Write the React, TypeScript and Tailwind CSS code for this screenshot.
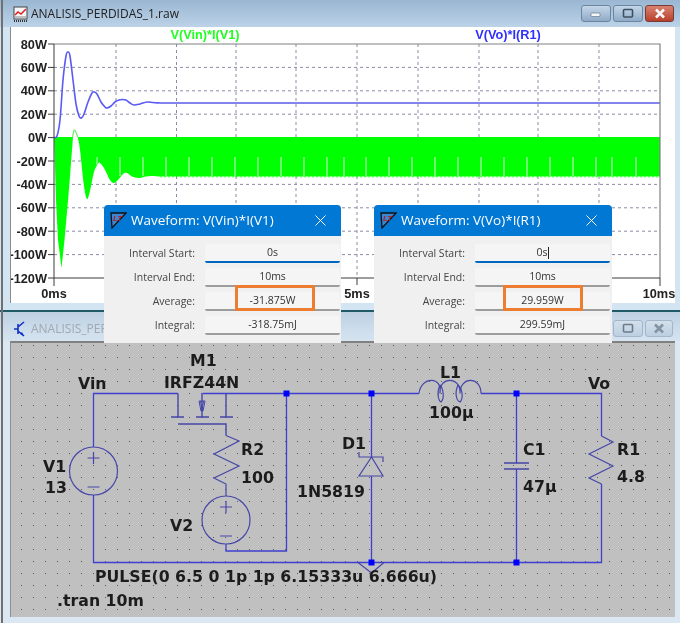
import React from "react";

type P = [number, number];

function curve(pts: P[]): string {
  let d = `M${pts[0][0]},${pts[0][1]}`;
  for (let i = 0; i < pts.length - 1; i++) {
    const p0 = pts[Math.max(i - 1, 0)];
    const p1 = pts[i];
    const p2 = pts[i + 1];
    const p3 = pts[Math.min(i + 2, pts.length - 1)];
    const c1: P = [p1[0] + (p2[0] - p0[0]) / 6, p1[1] + (p2[1] - p0[1]) / 6];
    const c2: P = [p2[0] - (p3[0] - p1[0]) / 6, p2[1] - (p3[1] - p1[1]) / 6];
    d += ` C${c1[0].toFixed(1)},${c1[1].toFixed(1)} ${c2[0].toFixed(1)},${c2[1].toFixed(1)} ${p2[0]},${p2[1]}`;
  }
  return d;
}

const bluePts: P[] = [
  [54, 137.5], [57, 136], [60, 120], [63, 80], [66, 56], [68, 52], [70, 56], [73, 80], [76, 104], [79, 116], [81.5, 118],
  [84, 114], [88, 102], [92, 93], [94, 92], [97, 94], [101, 102], [105, 107], [107, 108], [111, 106], [115, 102], [119, 100],
  [122, 99.5], [126, 100], [130, 103], [134, 105], [140, 104], [147, 102], [153, 102.5], [160, 103],
];
const greenTail: P[] = [
  [77.7, 137], [80, 150], [84, 186], [87, 199], [90, 191], [94, 172], [98, 164], [100, 163], [104, 168], [110, 180], [114, 183],
  [118, 180], [123, 174], [127, 173], [133, 177], [140, 178], [146, 176.5], [152, 176], [160, 176.5],
];

const yTicks = [
  ["80W", 44], ["60W", 67.4], ["40W", 90.8], ["20W", 114.2], ["0W", 137.6], ["-20W", 161], ["-40W", 184.4], ["-60W", 207.8],
  ["-80W", 231.2], ["-100W", 254.6], ["-120W", 278],
] as const;
const xGrid = [116, 176.5, 236, 296, 357, 418, 479, 538, 599];
const spikes = [97, 120, 143, 166, 189, 212, 235, 258, 281, 304, 327, 344, 366, 389, 412, 435, 458, 481, 504, 527, 550, 573, 596, 612, 636];

function Plot() {
  const tail = curve(greenTail).replace(/^M[^ ]+/, "");
  return (
    <svg viewBox="11 27 664 276" className="block h-full w-full font-['Liberation_Sans'] text-[12.75px] font-bold">
      {yTicks.slice(1, 10).map(([l, y]) =>
        y === 137.6 ? null : (
          <line key={l} x1="54" x2="660" y1={y} y2={y} stroke="#8c8ca8" strokeWidth="1" strokeDasharray="3 3" />
        )
      )}
      {xGrid.map((x) => (
        <line key={x} x1={x} x2={x} y1="44" y2="278" stroke="#8c8ca8" strokeWidth="1" strokeDasharray="3 3" />
      ))}
      <path
        d={`M54,137 L54.5,150 L56,200 L58,240 L61.5,268 L64.5,240 L68.5,195 L72,150 L73,137 L77.7,137 ${tail} L660,176.5 L660,137 Z`}
        fill="#00ff00"
      />
      <line x1="160" x2="660" y1="177" y2="177" stroke="#00ff00" strokeWidth="1" strokeDasharray="2 2" opacity="0.6" />
      <path d="M72.5,137 L74,130 L75.5,131 L77.7,137" fill="none" stroke="#70f070" strokeWidth="1.2" />
      {spikes.map((x) => (
        <line key={x} x1={x} x2={x} y1="157" y2={x < 110 ? 165 : 176} stroke="#d8ffd8" strokeWidth="1" />
      ))}
      <path d={curve(bluePts)} fill="none" stroke="#5a5af5" strokeWidth="1.6" />
      <line x1="160" x2="660" y1="103" y2="103" stroke="#8484ee" strokeWidth="2" />
      <path d="M54,44 H660 V278" fill="none" stroke="#808080" strokeWidth="1.2" />
      <path d="M54,44 V286 M54,278 H660 M357,278 V285 M660,278 V286" fill="none" stroke="#3a3a3a" strokeWidth="1" />
      {yTicks.map(([l, y]) => (
        <g key={l}>
          <line x1="48" x2="54" y1={y} y2={y} stroke="#3a3a3a" strokeWidth="1" />
          <text x="47" y={y + 4.5} textAnchor="end" fill="#222">{l}</text>
        </g>
      ))}
      <text x="54" y="298" textAnchor="middle" fill="#222">0ms</text>
      <text x="357" y="298" textAnchor="middle" fill="#222">5ms</text>
      <text x="659" y="298" textAnchor="middle" fill="#222">10ms</text>
      <text x="205" y="39" textAnchor="middle" fill="#22ff22">V(Vin)*I(V1)</text>
      <text x="508" y="39" textAnchor="middle" fill="#3030ff">V(Vo)*I(R1)</text>
    </svg>
  );
}

const WIRE = "#3f3fd0";
const PART = "#4646a8";

function Source({ cx, cy }: { cx: number; cy: number }) {
  return (
    <g fill="none" stroke={PART} strokeWidth="1.2">
      <circle cx={cx} cy={cy} r="24" />
      <path d={`M${cx - 6},${cy - 13} h12 M${cx},${cy - 19} v12 M${cx - 6},${cy + 16} h12`} />
    </g>
  );
}

function Node({ x, y }: { x: number; y: number }) {
  return <rect x={x - 3} y={y - 3} width="6" height="6" fill="#0000ff" />;
}

const labels: [string, number, number][] = [
  ["M1", 190, 366], ["IRFZ44N", 164, 388], ["Vin", 78, 389], ["R2", 241, 455], ["100", 241, 483], ["V1", 43, 472], ["13", 45, 493],
  ["V2", 170, 531], ["1N5819", 297, 497], ["D1", 342, 449], ["L1", 440, 378], ["100µ", 429, 418], ["C1", 523, 455], ["47µ", 523, 492],
  ["Vo", 588, 389], ["R1", 617, 455], ["4.8", 617, 482], ["PULSE(0 6.5 0 1p 1p 6.15333u 6.666u)", 95, 582], [".tran 10m", 57, 606],
];

function Schematic() {
  return (
    <svg viewBox="11 343 664 274" className="block h-full w-full font-['DejaVu_Sans'] text-[15.75px] font-bold">
      <defs>
        <pattern id="dots" x="21" y="345" width="12" height="12" patternUnits="userSpaceOnUse">
          <rect width="1" height="1" fill="#5a5a5a" />
        </pattern>
      </defs>
      <rect x="11" y="343" width="664" height="274" fill="url(#dots)" />
      <path
        d="M178,393.5 H93.5 V447 M93.5,495 V562.5 H601.5 V484 M601.5,436 V393.5 H481 M419,393.5 H202.5 M286.5,393.5 V551 H226 V544 M371.5,393.5 V457 M371.5,476 V562.5 M516.5,393.5 V463 M516.5,469 V562.5"
        fill="none"
        stroke={WIRE}
        strokeWidth="1.3"
      />
      <g fill="none" stroke={PART} strokeWidth="1.2">
        <path d="M178,393.5 V417 M171,417 h13 M196,417 h13 M220,417 h13 M226,393.5 V417 M202,393.5 V417 M178,424 H226 V435.5" strokeWidth="1.4" />
        <path d="M199,401 h6 l-2,10 h-2 z M200.5,401 l1.5,10 l1.5,-10" strokeWidth="1" />
        <path d="M226,435.5 L239,441 L214,454 L239,466 L214,478 L226,484 V496" />
        <path d="M601.5,436 L613,442 L589,454 L613,466 L589,478 L601.5,484" />
        <path d="M419,393.5 C421,376 443,376 440,393.5 M440,393 C439,376 461,376 460,393.5 M460,393.5 C460,376 481,376 481,393.5" />
        <path d="M440,385 C436,394 439,401 441,402 C445,398 443,388 440,385 M458,385 C454,394 457,401 460,402 C464,398 462,388 458,385" />
        <path d="M371.5,457 L383,476 H359 Z M359,452 V457 H383 V462" />
        <path d="M504,463 H529 M504,469 H529" strokeWidth="1.6" />
        <path d="M358,562.5 L371.5,573 L384,562.5" />
      </g>
      <Source cx={93.5} cy={471} />
      <Source cx={226} cy={520} />
      <Node x={286.5} y={393.5} />
      <Node x={371.5} y={393.5} />
      <Node x={516.5} y={393.5} />
      <Node x={371.5} y={562.5} />
      <Node x={516.5} y={562.5} />
      {labels.map(([t, x, y]) => (
        <text key={t} x={x} y={y} fill="#1c1c1c">{t}</text>
      ))}
    </svg>
  );
}

function WinBtn({ w, tone, glyph }: { w: string; tone: "plain" | "close" | "idle"; glyph: "min" | "max" | "x" }) {
  const cls =
    tone === "close"
      ? "border-[#7a3a34] bg-linear-to-b from-[#d9806f] to-[#b8402c]"
      : tone === "plain"
        ? "border-[#6d86a0] bg-linear-to-b from-[#c4d6e8] to-[#8fabc8]"
        : "border-[#a3b6ca] bg-linear-to-b from-[#d3e0ec] to-[#bccfe1]";
  const col = tone === "close" || tone === "plain" ? "#f4f6f8" : "#8493a3";
  return (
    <div className={`flex h-[17px] items-center justify-center rounded-[3px] border ${w} ${cls}`}>
      <svg width="14" height="11" viewBox="0 0 14 11">
        {glyph === "min" && <rect x="2" y="5" width="9" height="3.5" rx="1" fill={col} stroke="#5a6a7c" strokeWidth="0.6" />}
        {glyph === "max" && <rect x="2.5" y="1.5" width="9" height="7.5" rx="1" fill="none" stroke={tone === "plain" ? "#3f4f62" : "#6c7a8a"} strokeWidth="1.6" />}
        {glyph === "x" && <path d="M3,1.5 L11,9.5 M11,1.5 L3,9.5" stroke={col} strokeWidth="2.6" />}
      </svg>
    </div>
  );
}

function PlotIcon() {
  return (
    <svg width="15" height="16" viewBox="0 0 15 16">
      <rect x="1" y="1" width="13" height="12" fill="#f4f6f8" stroke="#444" strokeWidth="1" />
      <path d="M1,15 h1 M3,15 h1 M5,15 h1 M7,15 h1 M9,15 h1 M11,15 h1 M13,15 h1" stroke="#333" strokeWidth="2" />
      <path d="M2,9 L5,6 L8,8 L13,3" fill="none" stroke="#e02020" strokeWidth="1.5" />
      <path d="M2,11 H13" stroke="#888" strokeWidth="1" />
    </svg>
  );
}

function SchemIcon() {
  return (
    <svg width="14" height="16" viewBox="0 0 14 16">
      <path d="M1,8 H5 M5,3 V13 M5,6 L11,1 M5,10 L11,15" fill="none" stroke="#1030c8" strokeWidth="1.6" />
      <path d="M11,15 L7,13 L9,11 Z" fill="#1030c8" />
    </svg>
  );
}

function LtLogo() {
  return (
    <svg width="17" height="17" viewBox="0 0 17 17" className="font-['Liberation_Sans']">
      <path d="M1,1 H16 L2,16 Z" fill="#3a86d0" stroke="#111" strokeWidth="1.3" />
      <text x="3" y="9" fill="#c01818" className="text-[8px] font-bold italic">LT</text>
    </svg>
  );
}

function Row({ label, value, active, caret }: { label: string; value: string; active?: boolean; caret?: boolean }) {
  return (
    <div className="flex h-[19px] items-center">
      <div className="w-[91px] text-right text-[10.5px] text-[#444]">{label}</div>
      <div
        className={`ml-[10px] flex h-full w-[135px] items-center justify-center rounded-[2px] bg-[#f5f5f5] text-[10.5px] text-[#333] ${
          active ? "border-b-2 border-b-[#0067c0]" : "border-b-2 border-b-[#9c9c9c]"
        }`}
      >
        {value}
        {caret && <span className="h-[12px] w-px bg-[#222]" />}
      </div>
    </div>
  );
}

function Dialog({ pos, title, rows }: { pos: string; title: string; rows: [string, string][] }) {
  return (
    <div className={`absolute flex flex-col overflow-hidden rounded-t-[4px] bg-[#f0f0f0] font-['Open_Sans'] ${pos}`}>
      <div className="flex h-[31px] shrink-0 items-center bg-[#0078d4] pl-[6px] pr-[15px] text-white">
        <LtLogo />
        <span className="ml-[4px] flex-1 text-[13.5px] leading-none">{title}</span>
        <svg width="11" height="11" viewBox="0 0 11 11">
          <path d="M0.5,0.5 L10.5,10.5 M10.5,0.5 L0.5,10.5" stroke="#fff" strokeWidth="1" />
        </svg>
      </div>
      <div className="flex flex-col gap-[5px] pt-[8px]">
        {rows.map(([l, v], i) => (
          <Row key={l} label={l} value={v} active={i === 0} caret={i === 0 && title.includes("Vo")} />
        ))}
      </div>
    </div>
  );
}

export default function App() {
  return (
    <div className="relative flex h-[623px] w-[680px] flex-col overflow-hidden bg-[#dbe8f4] font-['Open_Sans'] blur-[0.35px]">
      <div className="flex h-[312px] shrink-0 flex-col border-b-2 border-b-[#1f5a66] bg-[#d3e5f3]">
        <div className="flex h-[27px] shrink-0 items-center bg-linear-to-b from-[#9ab6d2] to-[#bcd3e8] pl-[13px] pr-[6px]">
          <PlotIcon />
          <span className="ml-[3px] flex-1 text-[12px] text-[#222]">ANALISIS_PERDIDAS_1.raw</span>
          <div className="flex gap-[2px]">
            <WinBtn w="w-[30px]" tone="plain" glyph="min" />
            <WinBtn w="w-[30px]" tone="plain" glyph="max" />
            <WinBtn w="w-[29px]" tone="close" glyph="x" />
          </div>
        </div>
        <div className="ml-[10px] mr-[5px] h-[276px] border-l border-l-[#8d8d8d] bg-white">
          <Plot />
        </div>
      </div>
      <div className="flex flex-1 flex-col">
        <div className="flex h-[29px] shrink-0 items-center bg-linear-to-b from-[#bdd1e3] to-[#d6e4f0] pl-[13px] pr-[7px] pt-[4px]">
          <SchemIcon />
          <span className="ml-[4px] w-[73px] overflow-hidden whitespace-nowrap text-[12px] text-[#a0a8b0]">ANALISIS_PERDIDAS_1.asc</span>
          <div className="flex flex-1 justify-end gap-[2px]">
            <WinBtn w="w-[30px]" tone="idle" glyph="max" />
            <WinBtn w="w-[28px]" tone="idle" glyph="x" />
          </div>
        </div>
        <div className="ml-[10px] mr-[5px] h-[276px] border-l border-t-2 border-l-[#8d8d8d] border-t-[#808080] bg-[#c0c0c0]">
          <Schematic />
        </div>
      </div>
      <div className="pointer-events-none absolute inset-y-0 left-[1px] w-[2px] bg-[#707070]" />
      <Dialog
        pos="left-[104px] top-[205px] h-[138px] w-[237px]"
        title="Waveform: V(Vin)*I(V1)"
        rows={[["Interval Start:", "0s"], ["Interval End:", "10ms"], ["Average:", "-31.875W"], ["Integral:", "-318.75mJ"]]}
      />
      <Dialog
        pos="left-[374px] top-[205px] h-[138px] w-[238px]"
        title="Waveform: V(Vo)*I(R1)"
        rows={[["Interval Start:", "0s"], ["Interval End:", "10ms"], ["Average:", "29.959W"], ["Integral:", "299.59mJ"]]}
      />
      <div className="absolute left-[235px] top-[285px] h-[26px] w-[80px] border-[3px] border-[#ed7d31]" />
      <div className="absolute left-[503px] top-[285px] h-[26px] w-[80px] border-[3px] border-[#ed7d31]" />
    </div>
  );
}
